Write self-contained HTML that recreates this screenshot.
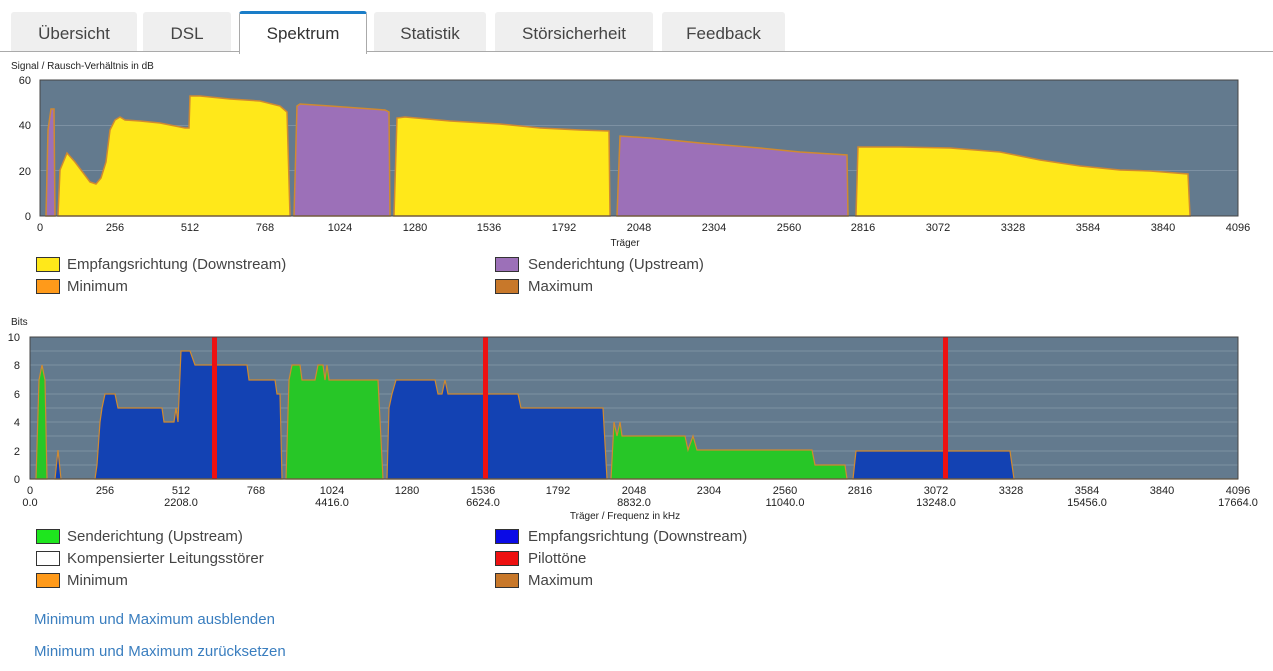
<!DOCTYPE html>
<html><head><meta charset="utf-8"><style>
body{margin:0;width:1273px;height:671px;background:#fff;font-family:"Liberation Sans","DejaVu Sans",sans-serif;position:relative;overflow:hidden}
.tab{position:absolute;top:12px;height:39px;background:#efefef;border-radius:3px 3px 0 0;font-size:17px;color:#444;text-align:center;line-height:43px}
.tab.act{background:#fff;border:1px solid #aaa;border-bottom:none;border-top:3px solid #1a7dc8;top:11px;height:40px;line-height:40px;color:#333}
.line{position:absolute;top:51px;left:0;width:1273px;height:1px;background:#aaa}
.lg{position:absolute;font-size:15px;color:#444}
.bx{position:absolute;width:22px;height:13px;border:1px solid #333}
.lnk{position:absolute;left:34px;font-size:15px;color:#3a7ebf}
svg{position:absolute;left:0;top:0}
svg text{font-family:"Liberation Sans","DejaVu Sans",sans-serif;font-size:11px;fill:#222}
</style></head><body>
<div class="line"></div>
<div class="tab" style="left:11px;width:126px">Übersicht</div>
<div class="tab" style="left:143px;width:88px">DSL</div>
<div class="tab act" style="left:239px;width:126px">Spektrum</div>
<div class="tab" style="left:374px;width:112px">Statistik</div>
<div class="tab" style="left:495px;width:158px">Störsicherheit</div>
<div class="tab" style="left:662px;width:123px">Feedback</div>

<svg width="1273" height="671">
<text x="11" y="69" style="font-size:10px">Signal / Rausch-Verhältnis in dB</text>
<rect x="40" y="80" width="1198" height="136" fill="#637a8e"/>
<g stroke="#7d91a3" stroke-width="1"><line x1="40" y1="125.5" x2="1238" y2="125.5"/><line x1="40" y1="170.5" x2="1238" y2="170.5"/></g>
<g stroke="#d08a30" stroke-width="1.5">
<polygon fill="#9c70b8" points="46,216 48,130 51,109 54,109 55,216"/>
<polygon fill="#ffe81a" points="58,216 60,170 67,153 75,162 90,182 96,184 101,178 106,162 110,130 115,120 120,117 125,120 140,121 160,123 185,128 189,128 190,96 200,96 230,99 260,101 280,106 287,112 290,216"/>
<polygon fill="#9c70b8" points="294,216 297,106 300,104 330,106 385,110 389,112 390,216"/>
<polygon fill="#ffe81a" points="394,216 397,118 405,117 450,121 500,124 540,128 580,130 609,131 610,216"/>
<polygon fill="#9c70b8" points="617,216 620,136 650,138 700,143 760,148 800,152 847,155 848,216"/>
<polygon fill="#ffe81a" points="856,216 858,147 900,147 950,148 1000,152 1040,160 1080,166 1120,170 1150,171 1188,174 1190,216"/>
</g>
<rect x="40" y="80" width="1198" height="136" fill="none" stroke="#444"/>
<g text-anchor="end"><text x="31" y="84">60</text><text x="31" y="129">40</text><text x="31" y="175">20</text><text x="31" y="220">0</text></g>
<g text-anchor="middle">
<text x="40" y="231">0</text><text x="115" y="231">256</text><text x="190" y="231">512</text><text x="265" y="231">768</text><text x="340" y="231">1024</text><text x="415" y="231">1280</text><text x="489" y="231">1536</text><text x="564" y="231">1792</text><text x="639" y="231">2048</text><text x="714" y="231">2304</text><text x="789" y="231">2560</text><text x="863" y="231">2816</text><text x="938" y="231">3072</text><text x="1013" y="231">3328</text><text x="1088" y="231">3584</text><text x="1163" y="231">3840</text><text x="1238" y="231">4096</text>
<text x="625" y="246" style="font-size:10px">Träger</text></g>

<text x="11" y="325" style="font-size:10px">Bits</text>
<rect x="30" y="337" width="1208" height="142" fill="#637a8e"/>
<g stroke="#7d91a3"><line x1="30" y1="351" x2="1238" y2="351"/><line x1="30" y1="365" x2="1238" y2="365"/><line x1="30" y1="380" x2="1238" y2="380"/><line x1="30" y1="394" x2="1238" y2="394"/><line x1="30" y1="408" x2="1238" y2="408"/><line x1="30" y1="422" x2="1238" y2="422"/><line x1="30" y1="436" x2="1238" y2="436"/><line x1="30" y1="451" x2="1238" y2="451"/><line x1="30" y1="465" x2="1238" y2="465"/></g>
<g stroke="#d08a30" stroke-width="1.2">
<polygon fill="#27c627" points="36,479 39,380 42,365 45,380 47,479"/>
<polygon fill="#1342b3" points="55,479 58,450 61,479"/>
<polygon fill="#1342b3" points="95,479 97,465 100,422 102,408 105,394 115,394 118,408 162,408 164,422 174,422 176,408 178,422 181,351 190,351 195,365 247,365 249,380 275,380 277,394 280,394 282,479"/>
<polygon fill="#27c627" points="286,479 289,380 292,365 300,365 302,380 315,380 318,365 323,365 325,380 327,365 329,380 378,380 383,479"/>
<polygon fill="#1342b3" points="387,479 389,408 392,394 396,380 435,380 438,394 442,394 445,380 448,394 518,394 521,408 603,408 607,479"/>
<polygon fill="#27c627" points="611,479 614,422 617,436 620,422 622,436 685,436 688,450 693,436 697,450 812,450 815,465 845,465 847,479"/>
<polygon fill="#1342b3" points="853,479 856,451 1010,451 1014,479"/>
<line x1="30" y1="479" x2="1238" y2="479"/>
</g>
<g fill="#ee1111"><rect x="212" y="337" width="5" height="142"/><rect x="483" y="337" width="5" height="142"/><rect x="943" y="337" width="5" height="142"/></g>
<rect x="30" y="337" width="1208" height="142" fill="none" stroke="#444"/>
<g text-anchor="end"><text x="20" y="341">10</text><text x="20" y="369">8</text><text x="20" y="398">6</text><text x="20" y="426">4</text><text x="20" y="455">2</text><text x="20" y="483">0</text></g>
<g text-anchor="middle">
<text x="30" y="494">0</text><text x="105" y="494">256</text><text x="181" y="494">512</text><text x="256" y="494">768</text><text x="332" y="494">1024</text><text x="407" y="494">1280</text><text x="483" y="494">1536</text><text x="558" y="494">1792</text><text x="634" y="494">2048</text><text x="709" y="494">2304</text><text x="785" y="494">2560</text><text x="860" y="494">2816</text><text x="936" y="494">3072</text><text x="1011" y="494">3328</text><text x="1087" y="494">3584</text><text x="1162" y="494">3840</text><text x="1238" y="494">4096</text>
<text x="30" y="506">0.0</text><text x="181" y="506">2208.0</text><text x="332" y="506">4416.0</text><text x="483" y="506">6624.0</text><text x="634" y="506">8832.0</text><text x="785" y="506">11040.0</text><text x="936" y="506">13248.0</text><text x="1087" y="506">15456.0</text><text x="1238" y="506">17664.0</text>
<text x="625" y="519" style="font-size:10px">Träger / Frequenz in kHz</text></g>
</svg>

<div class="bx" style="left:36px;top:257px;background:#ffe81a"></div><div class="lg" style="left:67px;top:256px">Empfangsrichtung (Downstream)</div>
<div class="bx" style="left:495px;top:257px;background:#9c70b8"></div><div class="lg" style="left:528px;top:256px">Senderichtung (Upstream)</div>
<div class="bx" style="left:36px;top:279px;background:#ff9a1a"></div><div class="lg" style="left:67px;top:278px">Minimum</div>
<div class="bx" style="left:495px;top:279px;background:#c8782a"></div><div class="lg" style="left:528px;top:278px">Maximum</div>

<div class="bx" style="left:36px;top:529px;background:#1ee61e"></div><div class="lg" style="left:67px;top:528px">Senderichtung (Upstream)</div>
<div class="bx" style="left:495px;top:529px;background:#0a0ae6"></div><div class="lg" style="left:528px;top:528px">Empfangsrichtung (Downstream)</div>
<div class="bx" style="left:36px;top:551px;background:#fff"></div><div class="lg" style="left:67px;top:550px">Kompensierter Leitungsstörer</div>
<div class="bx" style="left:495px;top:551px;background:#ee1111"></div><div class="lg" style="left:528px;top:550px">Pilottöne</div>
<div class="bx" style="left:36px;top:573px;background:#ff9a1a"></div><div class="lg" style="left:67px;top:572px">Minimum</div>
<div class="bx" style="left:495px;top:573px;background:#c8782a"></div><div class="lg" style="left:528px;top:572px">Maximum</div>

<div class="lnk" style="top:611px">Minimum und Maximum ausblenden</div>
<div class="lnk" style="top:643px">Minimum und Maximum zurücksetzen</div>
</body></html>
